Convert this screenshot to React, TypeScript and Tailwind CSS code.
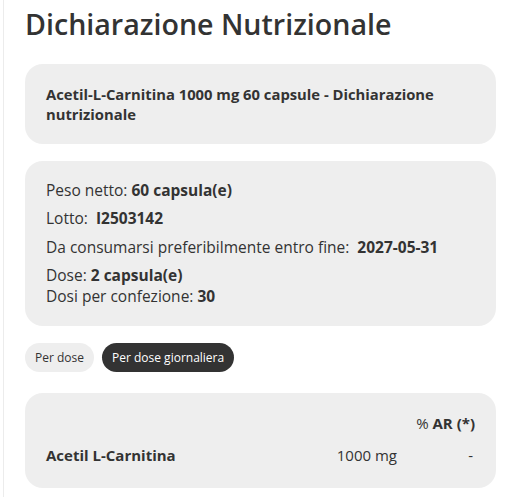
import React, { useState } from 'react';

const font = { fontFamily: '"Open Sans", Lato, sans-serif' };

const App: React.FC = () => {
  const [tab, setTab] = useState<'dose' | 'giornaliera'>('giornaliera');

  return (
    <div className="min-h-[497px] w-[506px] bg-white text-[#333]" style={font}>
      <div className="ml-[3px] min-h-[497px] border-l border-[#ececec] pl-[21px] pr-[10px]">
        <h2 className="pt-[4px] text-[28.6px] font-semibold leading-[40px] text-[#333]">
          Dichiarazione Nutrizionale
        </h2>

        <div className="mt-[20px] rounded-[18px] bg-[#eeeeee] px-[21px] py-[20px]">
          <p className="text-[14.8px] font-bold leading-[20px]">
            Acetil-L-Carnitina 1000 mg 60 capsule - Dichiarazione nutrizionale
          </p>
        </div>

        <div className="mt-[17px] rounded-[18px] bg-[#eeeeee] px-[21px] py-[19px] text-[15.5px] leading-[21px]">
          <p>
            Peso netto: <b>60 capsula(e)</b>
          </p>
          <p className="mt-[7px]">
            Lotto: &nbsp;<b>I2503142</b>
          </p>
          <p className="mt-[8px]">
            Da consumarsi preferibilmente entro fine: &nbsp;<b>2027-05-31</b>
          </p>
          <p className="mt-[7px]">
            Dose: <b>2 capsula(e)</b>
            <br />
            Dosi per confezione: <b>30</b>
          </p>
        </div>

        <div className="mt-[17px] flex gap-[8px]">
          <button
            onClick={() => setTab('dose')}
            className={`h-[29px] rounded-full px-[10px] text-[12px] ${
              tab === 'dose' ? 'bg-[#333] text-white' : 'bg-[#eeeeee] text-[#333]'
            }`}
          >
            Per dose
          </button>
          <button
            onClick={() => setTab('giornaliera')}
            className={`h-[29px] rounded-full px-[10px] text-[12px] ${
              tab === 'giornaliera' ? 'bg-[#333] text-white' : 'bg-[#eeeeee] text-[#333]'
            }`}
          >
            Per dose giornaliera
          </button>
        </div>

        <div className="mt-[21px] rounded-[18px] bg-[#eeeeee] px-[21px] pt-[20px] pb-[22px] text-[15px] leading-[21px]">
          <div className="flex justify-end">
            <span>
              % <b>AR (*)</b>
            </span>
          </div>
          <div className="mt-[11px] flex items-center">
            <span className="flex-1 font-bold">Acetil L-Carnitina</span>
            <span className="w-[80px] text-right">1000 mg</span>
            <span className="w-[78px] text-right pr-[2px]">-</span>
          </div>
        </div>
      </div>
    </div>
  );
};

export default App;
